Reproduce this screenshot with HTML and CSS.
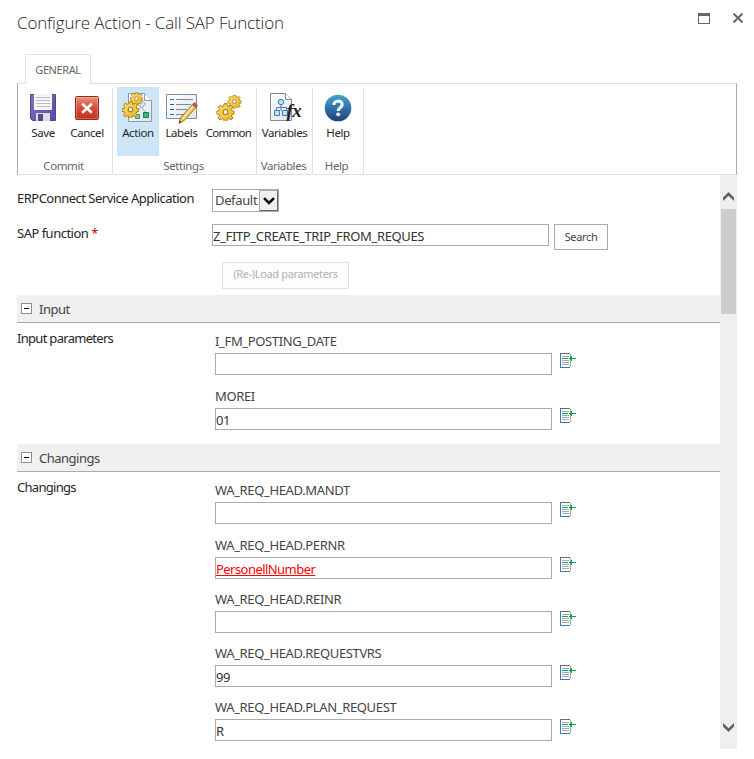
FILE: index.html
```
<!DOCTYPE html>
<html lang="en">
<head>
<meta charset="utf-8">
<title>Configure Action - Call SAP Function</title>
<link rel="stylesheet" href="styles.css">
</head>
<body>
<svg class="defs" width="0" height="0" aria-hidden="true">
  <defs>
    <linearGradient id="gold" x1="0" y1="0" x2="1" y2="1"><stop offset="0" stop-color="#ffe27a"/><stop offset="1" stop-color="#e3ae22"/></linearGradient>
    <linearGradient id="purple" x1="0" y1="0" x2="1" y2="1"><stop offset="0" stop-color="#8272c4"/><stop offset="1" stop-color="#5a479f"/></linearGradient>
    <linearGradient id="red" x1="0" y1="0" x2="0" y2="1"><stop offset="0" stop-color="#eb9484"/><stop offset=".5" stop-color="#d64c38"/><stop offset="1" stop-color="#c3301e"/></linearGradient>
    <linearGradient id="blue" x1="0" y1="0" x2="0" y2="1"><stop offset="0" stop-color="#43a5d0"/><stop offset="1" stop-color="#233f7d"/></linearGradient>
    <linearGradient id="sheet" x1="0" y1="0" x2="1" y2="1"><stop offset="0" stop-color="#fff"/><stop offset="1" stop-color="#dce6ee"/></linearGradient>
    <symbol id="gear" viewBox="-10 -10 20 20">
      <g fill="url(#gold)" stroke="#a87b12" stroke-width="1.2">
        <path d="M-1.700-9.300h3.400l.5 2.800 1.900.8 2.400-1.700 2.400 2.400-1.700 2.400.8 1.900 2.800.5v3.400l-2.800.5-.8 1.900 1.700 2.400-2.400 2.400-2.400-1.700-1.900.8-.5 2.800h-3.400l-.5-2.800-1.900-.8-2.400 1.700-2.400-2.400 1.700-2.400-.8-1.900-2.800-.5v-3.400l2.800-.5.8-1.900-1.700-2.400 2.400-2.400 2.400 1.700 1.900-.8z" transform="translate(0 -.7) scale(.92)"/>
        <circle r="2.700" fill="#fff"/>
      </g>
    </symbol>
    <symbol id="insert" viewBox="0 0 16 15">
      <g shape-rendering="crispEdges">
        <path fill="#fff" d="M0 0h11v15H0z"/>
        <path fill="#a8a8a8" d="M10 1h1v3h-1zM10 7h1v7h-1zM2 3h7v1H2zM2 7h7v1H2zM2 9h7v1H2zM2 11h7v1H2z"/>
        <path fill="#6c6c6c" d="M0 0h10v1H0z"/>
        <path fill="#3d79b8" d="M0 1h1v14H0zM1 14h9v1H1z"/>
        <path fill="#00a651" d="M2 5h6v1H2zM9 5h7v1H9zM10 4h1v3h-1zM11 3h1v5h-1z"/>
      </g>
    </symbol>
  </defs>
</svg>

<header class="titlebar">
  <h1>Configure Action - Call SAP Function</h1>
  <div class="window-buttons">
    <svg width="12" height="11" shape-rendering="crispEdges"><path fill="#666" d="M0 0h12v11H0z"/><path fill="#fff" d="M1 3h10v7H1z"/></svg>
    <svg width="10" height="10"><path stroke="#666" stroke-width="2" d="M.5.5l9 9M9.500.5l-9 9"/></svg>
  </div>
</header>

<nav class="tabs"><span class="tab">GENERAL</span></nav>

<section class="ribbon">
  <div class="group g-commit">
    <div class="tools">
      <button class="tool">
        <svg width="32" height="32" viewBox="0 0 32 32"><path fill="url(#purple)" stroke="#544390" d="M3.500 2.500h25v26h-23l-2-2z"/><path fill="#f5f6f8" d="M7 2h18v16H7z"/><path stroke="#b8bec6" d="M9 5.500h14M9 8.500h14M9 11.500h14M9 14.500h14"/><path fill="#dcdce6" d="M9 21h14v8H9z"/><path fill="#57458f" d="M11 22h5v7h-5z"/></svg>
        <span>Save</span>
      </button>
      <button class="tool">
        <svg width="32" height="32" viewBox="0 0 32 32"><rect x="4.500" y="4.500" width="23" height="23" rx="1" fill="url(#red)" stroke="#86301f"/><rect x="5.500" y="5.500" width="21" height="21" fill="none" stroke="#fff" opacity=".25"/><path stroke="#fff" stroke-width="2.600" d="M11.200 11.700l9.600 9M20.800 11.700l-9.600 9"/></svg>
        <span>Cancel</span>
      </button>
    </div>
    <div class="caption">Commit</div>
  </div>
  <div class="group g-settings">
    <div class="tools">
      <button class="tool active">
        <svg width="32" height="32" viewBox="0 0 32 32"><path fill="url(#sheet)" stroke="#8d9ba6" d="M6.500 1.500h16l7 7v21h-23z"/><path fill="#fff" stroke="#8d9ba6" d="M22.500 1.500v7h7"/><path fill="none" stroke="#92abc0" d="M16 18.500l3-3M19 15l5 5"/><path fill="#d8ecfb" stroke="#6aa3cd" d="M19.500 8l4 4-4 4-4-4z"/><path fill="#8fd4a8" stroke="#2f9a5c" d="M13.500 22.500h4v4h-4z"/><path fill="#45b576" stroke="#17854a" d="M21.500 20.500h5v5h-5z"/><use href="#gear" x="8" y="0" width="13" height="13"/><use href="#gear" x="0" y="9" width="17" height="17"/></svg>
        <span>Action</span>
      </button>
      <button class="tool">
        <svg width="32" height="32" viewBox="0 0 32 32"><path fill="url(#sheet)" stroke="#7890a5" d="M.500 2.500h30v24H.500z"/><path stroke="#2c6197" stroke-width="1.200" d="M4 7.500h4M4 12.500h4M4 17.500h4M4 22.500h4"/><path stroke="#7c8995" d="M10 7.500h17M10 12.500h15M10 17.500h11M10 22.500h7"/><path fill="#f3c65b" stroke="#9a7625" d="M26.500 12.500l3.500 2.800-11.500 13-5.500 3 1.500-5.500z"/><path stroke="#ffe9a6" stroke-width="1.300" d="M27 14.500L16.500 27"/><path fill="#d65349" stroke="#a33a34" stroke-width=".7" d="M26.500 12.300l2-1.500 3 2.600-1.600 2z"/><path fill="#333" d="M13 31.300l.8-2.500 1.700 1.300z"/></svg>
        <span>Labels</span>
      </button>
      <button class="tool">
        <svg width="32" height="32" viewBox="0 0 32 32"><use href="#gear" x="14.500" y="2.500" width="14" height="14"/><use href="#gear" x="3.500" y="11" width="18" height="18"/></svg>
        <span>Common</span>
      </button>
    </div>
    <div class="caption">Settings</div>
  </div>
  <div class="group g-variables">
    <div class="tools">
      <button class="tool">
        <svg width="32" height="32" viewBox="0 0 32 32"><path fill="url(#sheet)" stroke="#7d8b98" d="M1.500 1.500h15l6 6v21h-21z"/><path fill="#fff" stroke="#7d8b98" d="M16.500 1.500v6h6"/><path fill="none" stroke="#4d80ad" d="M12 13v6M7.500 19v-3.500h10V19"/><circle cx="12" cy="10" r="2.700" fill="#bfe0f8" stroke="#397db8"/><path fill="#c4e1f6" stroke="#397db8" d="M5.500 18.500h5v5h-5zM13.500 18.500h5v5h-5z"/><text class="fx" x="17.500" y="25">fx</text></svg>
        <span>Variables</span>
      </button>
    </div>
    <div class="caption">Variables</div>
  </div>
  <div class="group g-help">
    <div class="tools">
      <button class="tool">
        <svg width="32" height="32" viewBox="0 0 32 32"><circle cx="16" cy="16" r="13.300" fill="url(#blue)"/><path fill="none" stroke="#fff" stroke-width="3" d="M11.800 13c.1-5.200 8.600-5 8.400-.4-.1 3-4 3-4 6.300"/><circle cx="16.200" cy="22.300" r="1.900" fill="#fff"/></svg>
        <span>Help</span>
      </button>
    </div>
    <div class="caption">Help</div>
  </div>
</section>

<main class="pane">
  <div class="form">
    <div class="row r-service">
      <label>ERPConnect Service Application</label>
      <div class="select"><span>Default</span><span class="drop"><svg width="12" height="8"><path fill="none" stroke="#000" stroke-width="2.500" d="M1 1.200l5 4.800 5-4.800"/></svg></span></div>
    </div>
    <div class="row r-function">
      <label>SAP function <b>*</b></label>
      <div class="box"><span>Z_FITP_CREATE_TRIP_FROM_REQUES</span></div>
      <button class="btn search">Search</button>
    </div>
    <button class="btn load" disabled>(Re-)Load parameters</button>

    <h2 class="section"><i class="toggle"></i><span>Input</span></h2>
    <div class="params p-input">
      <div class="side">Input parameters</div>
      <div class="fields">
        <div class="field"><label>I_FM_POSTING_DATE</label><div class="line"><div class="box"></div><svg width="16" height="15"><use href="#insert"/></svg></div></div>
        <div class="field"><label>MOREI</label><div class="line"><div class="box"><span>01</span></div><svg width="16" height="15"><use href="#insert"/></svg></div></div>
      </div>
    </div>

    <h2 class="section"><i class="toggle"></i><span>Changings</span></h2>
    <div class="params">
      <div class="side">Changings</div>
      <div class="fields">
        <div class="field"><label>WA_REQ_HEAD.MANDT</label><div class="line"><div class="box"></div><svg width="16" height="15"><use href="#insert"/></svg></div></div>
        <div class="field"><label>WA_REQ_HEAD.PERNR</label><div class="line"><div class="box"><span class="reference">PersonellNumber</span></div><svg width="16" height="15"><use href="#insert"/></svg></div></div>
        <div class="field"><label>WA_REQ_HEAD.REINR</label><div class="line"><div class="box"></div><svg width="16" height="15"><use href="#insert"/></svg></div></div>
        <div class="field"><label>WA_REQ_HEAD.REQUESTVRS</label><div class="line"><div class="box"><span>99</span></div><svg width="16" height="15"><use href="#insert"/></svg></div></div>
        <div class="field"><label>WA_REQ_HEAD.PLAN_REQUEST</label><div class="line"><div class="box"><span>R</span></div><svg width="16" height="15"><use href="#insert"/></svg></div></div>
      </div>
    </div>
  </div>
  <div class="scrollbar">
    <svg class="up" width="12" height="9"><path fill="#606060" d="M0 5.500L5.500 0 11 5.500V9L5.500 3.800 0 9z"/></svg>
    <div class="thumb"></div>
    <svg class="down" width="12" height="9"><path fill="#606060" d="M0 0l5.500 5.200L11 0v3.500L5.500 9 0 3.500z"/></svg>
  </div>
</main>
</body>
</html>
```
FILE: styles.css
```
* { box-sizing: border-box; }
html, body { height: 759px; overflow: hidden; }
body { margin: 0; padding: 0 17px; background: #fff; color: #444; font: 13px/20px "Noto Sans", "Open Sans", sans-serif; letter-spacing: -.35px; }
.defs { position: absolute; }
svg { display: block; flex: none; }
button { font: inherit; letter-spacing: inherit; color: inherit; padding: 0; margin: 0; border: 0; background: none; }
h1, h2 { margin: 0; font-weight: 400; }
span { white-space: nowrap; }

.titlebar { display: flex; justify-content: space-between; height: 54px; padding-top: 11px; }
h1 { font: 300 17px/24px "Open Sans", sans-serif; letter-spacing: -.16px; color: #262626; }
.window-buttons { display: flex; gap: 23px; padding-top: 2px; margin-right: -6px; }

.tabs { height: 29px; padding-left: 8px; }
.tab { display: block; position: relative; z-index: 1; width: 66px; height: 30px; border: 1px solid #e1e1e1; border-bottom: 0; background: #fff; font-size: 11px; line-height: 30px; text-align: center; color: #666; letter-spacing: -.4px; }

.ribbon { display: flex; width: 720px; height: 92px; border: 1px solid #e1e1e1; border-left-color: #ababab; border-right-color: #ababab; padding-top: 3px; }
.group { display: flex; flex-direction: column; border-right: 1px solid #e1e1e1; font-size: 11.5px; letter-spacing: -.4px; margin-top: 1px; }
.g-commit { width: 95px; padding-left: 3px; }
.g-settings { width: 144px; padding-left: 4px; }
.g-variables { width: 56px; }
.g-help { width: 51px; }
.tools { display: flex; height: 69px; margin-top: -1px; }
.tool { display: flex; flex-direction: column; align-items: center; width: 42px; height: 69px; padding-top: 5px; color: #262626; line-height: 18px; }
.tool.active { background: #cde6f7; }
.g-commit .tool { width: 44px; }
.g-settings .tool + .tool { width: 45px; }
.g-settings .tool + .tool + .tool { width: 49px; letter-spacing: -.75px; }
.g-variables .tool { width: 56px; }
.g-help .tool { width: 51px; }
.caption { text-align: center; line-height: 20px; color: #666; margin-right: 5px; }
.g-commit .caption, .g-settings .caption { margin-right: 6px; }
.g-variables .caption { margin-right: 2px; }
.g-help .caption { margin-right: 3px; }
.fx { font: italic bold 19px "Liberation Serif", serif; letter-spacing: -.5px; fill: #222; }

.pane { display: flex; width: 720px; height: 574px; }
.form { width: 703px; overflow: hidden; }
.row { display: flex; align-items: flex-start; }
.row > label { width: 195px; color: #262626; letter-spacing: -.51px; }
.row b { color: #c00; font-weight: 400; }
.r-service { padding-top: 14px; height: 49px; }
.r-service label { margin-top: -1px; }
.select { display: flex; justify-content: space-between; width: 67px; height: 23px; border: 1px solid #ababab; padding-left: 2px; line-height: 21px; }
.drop { display: flex; align-items: center; justify-content: center; width: 19px; height: 21px; border: 1px solid #aaa; border-right: 1px solid #666; border-bottom: 1px solid #666; background: #efefef; }
.r-function > label { margin-top: -1px; }
.box { width: 337px; height: 22px; border: 1px solid #ababab; line-height: 23px; color: #333; }
.btn { border: 1px solid #ababab; background: #fdfdfd; font-size: 11px; line-height: 24px; color: #444; }
.search { width: 54px; height: 26px; margin-left: 5px; }
.load { display: block; width: 127px; height: 27px; margin: 12px 0 6px 205px; padding-bottom: 3px; border-color: #e1e1e1; color: #b1b1b1; line-height: 22px; }

.section { display: flex; align-items: flex-start; height: 28px; padding-left: 4px; background: #f0f0f0; border-bottom: 1px solid #ababab; font-size: 13px; line-height: 29px; letter-spacing: -.5px; }
.toggle { display: grid; place-items: center; width: 11px; height: 11px; margin: 8px 7px 0 0; border: 1px solid #8f8f8f; background: #fff; }
.toggle::after { content: ""; width: 5px; height: 1px; background: #000; }
.params { display: flex; padding-top: 6px; }
.p-input { height: 121px; }
.side { width: 198px; margin-top: -1px; color: #262626; letter-spacing: -.7px; }
.fields { padding-top: 4.4px; }
.field { height: 54.25px; }
.field label { display: block; height: 20px; line-height: 17px; }
.line { display: flex; gap: 8px; }
.reference { color: #f00; text-decoration: underline; letter-spacing: -.55px; }

.scrollbar { width: 17px; background: #efefef; display: flex; flex-direction: column; padding: 17px 1px 17px; }
.scrollbar svg { margin-left: 2px; }
.thumb { height: 105px; margin-top: 8px; background: #cdcdcd; }
.down { margin-top: auto; }
```
